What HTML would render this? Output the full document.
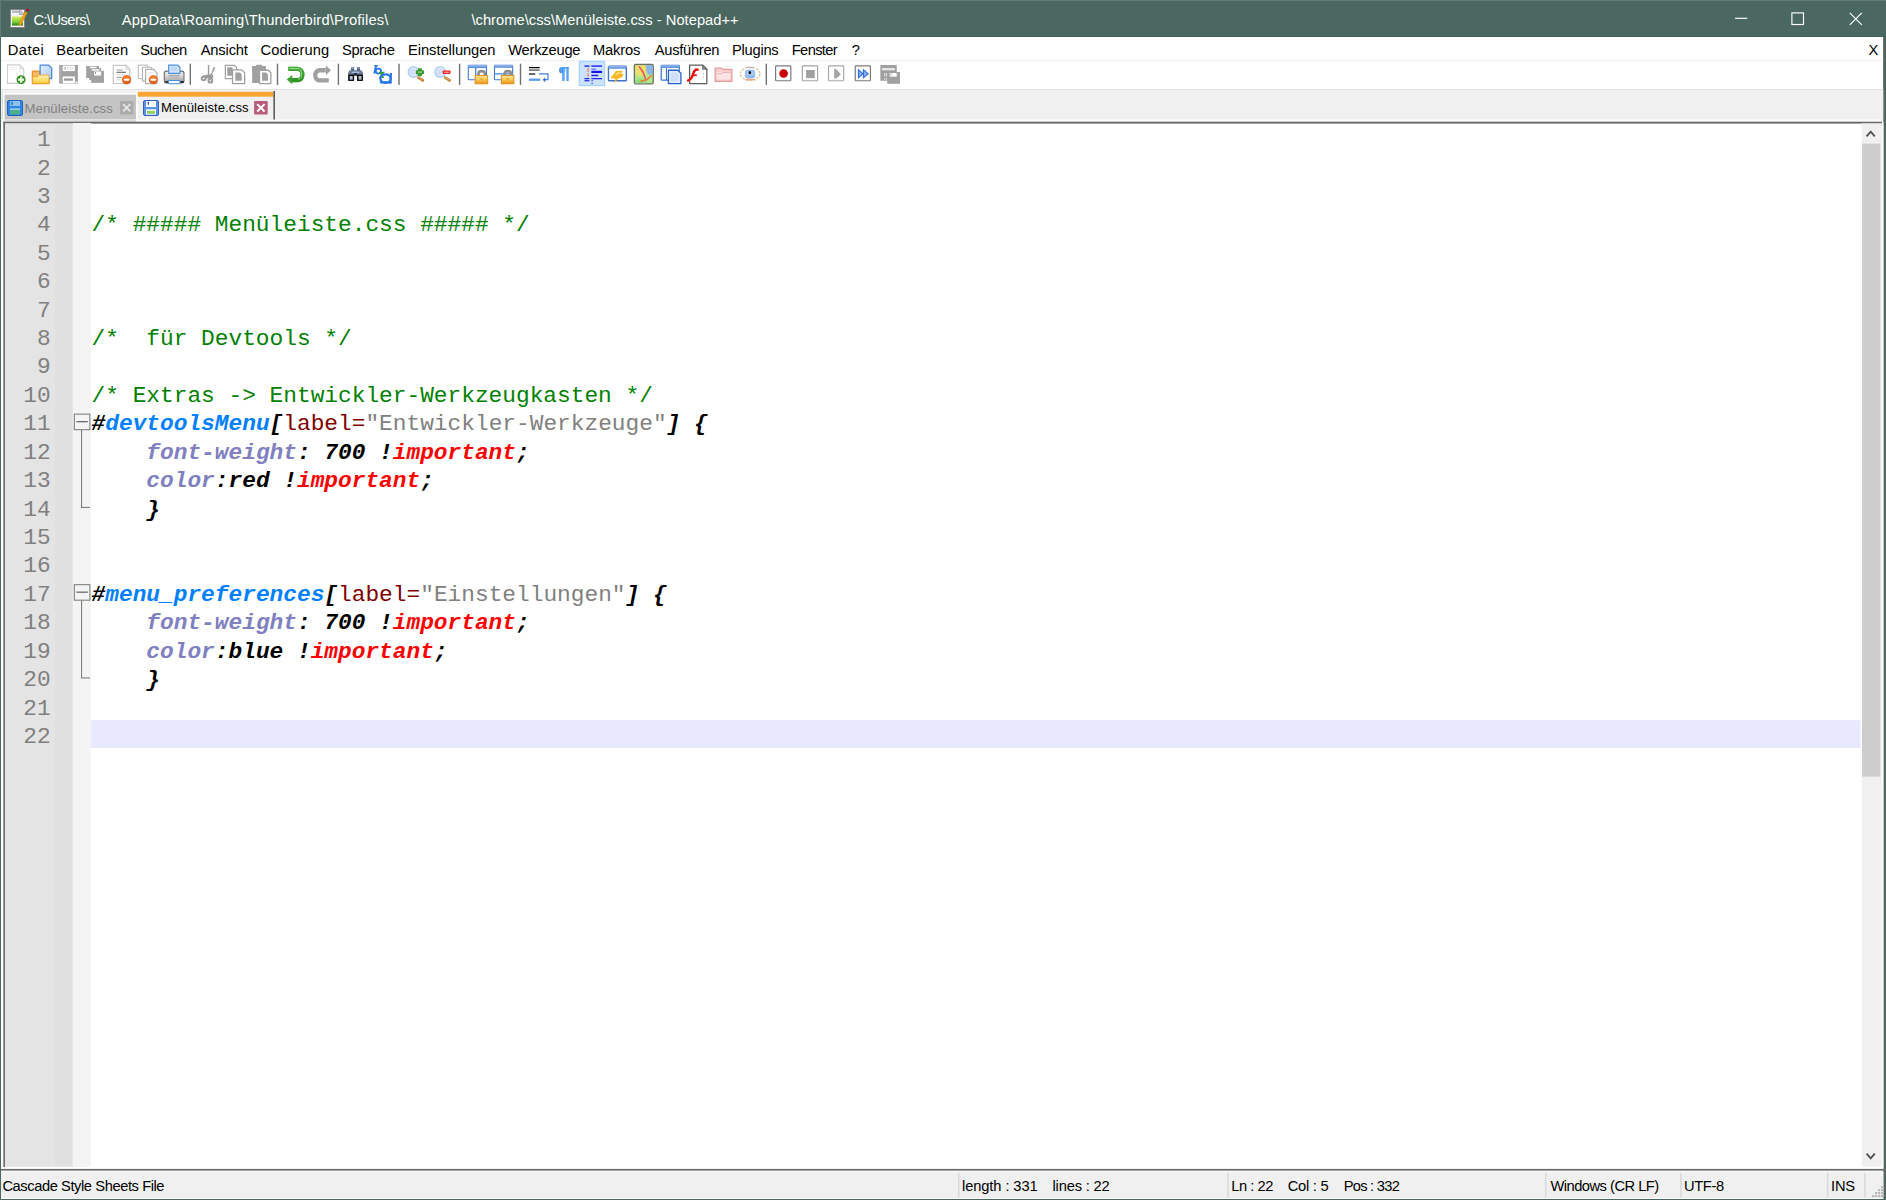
<!DOCTYPE html>
<html lang="de">
<head>
<meta charset="utf-8">
<title>Menüleiste.css - Notepad++</title>
<style>
html,body{margin:0;padding:0;}
body{width:1886px;height:1200px;position:relative;overflow:hidden;background:#fff;font-family:"Liberation Sans",sans-serif;}
.abs{position:absolute;}
.t{position:absolute;white-space:pre;line-height:20px;height:20px;font-family:"Liberation Sans",sans-serif;}
svg{position:absolute;overflow:visible;}
.ic{position:absolute;top:64.6px;width:19.6px;height:19.6px;}
.sep{position:absolute;top:63.6px;height:21.4px;width:1.3px;background:#6e6e6e;}
.code{position:absolute;left:91.6px;white-space:pre;font-family:"Liberation Mono",monospace;font-size:22.82px;line-height:28.42px;height:28.42px;color:#000;}
.ln{position:absolute;left:5px;width:45.6px;text-align:right;white-space:pre;font-family:"Liberation Mono",monospace;font-size:22.82px;line-height:28.42px;height:28.42px;color:#808080;}
.c{color:#008000;}
.bi{font-weight:bold;font-style:italic;}
.b{font-weight:bold;}
.id{color:#0080ff;font-weight:bold;font-style:italic;}
.at{color:#800000;}
.st{color:#808080;}
.pr{color:#8080c0;font-weight:bold;font-style:italic;}
.im{color:#ff0000;font-weight:bold;font-style:italic;}
</style>
</head>

<body>
<!-- window frame -->
<svg style="left:0;top:0" width="1886" height="1200" viewBox="0 0 1886 1200"><rect x="0" y="0" width="1886" height="1200" fill="#4a6860"/><rect x="0" y="0" width="1886" height="1" fill="#5d7c73"/><rect x="0" y="0" width="1" height="37" fill="#5d7c73"/><rect x="1" y="37" width="1882.3" height="1162" fill="#fff"/><rect x="1883.3" y="37" width="1.7" height="1162" fill="#596460"/><rect x="1" y="36" width="1884" height="1" fill="#42605a"/></svg>
<svg style="left:9px;top:7px" width="21" height="23" viewBox="0 0 21 23">
  <rect x="1.5" y="2.5" width="14" height="18" fill="#f4f4f6" stroke="#8a8088" stroke-width="1"/>
  <path d="M10.5 2.5 L15.5 7.5 L10.5 7.5 Z" fill="#c8c8d0" stroke="#8a8088" stroke-width=".6"/>
  <rect x="3" y="3.6" width="7" height="2.2" fill="#9aa" opacity=".8"/>
  <linearGradient id="gi" x1="0" y1="0" x2="0" y2="1"><stop offset="0" stop-color="#d8e85a"/><stop offset=".6" stop-color="#7fd43a"/><stop offset="1" stop-color="#1f7a12"/></linearGradient>
  <rect x="3" y="9.5" width="11" height="9" fill="url(#gi)"/>
  <path d="M9.5 17.5 L16.2 4.6 L18.2 5.8 L11.6 18.4 Z" fill="#f2a516" stroke="#c97f0a" stroke-width=".5"/>
  <circle cx="18.6" cy="2.9" r="1.2" fill="#c80010"/>
</svg>
<!-- caption buttons -->
<svg style="left:1700px;top:1px" width="184" height="36" viewBox="0 0 184 36">
  <g stroke="#fff" stroke-width="1.15" fill="none">
    <path d="M35 17.3 H47.3"/>
    <rect x="91.9" y="11.9" width="11.6" height="11.6"/>
    <path d="M149.8 11.8 L161.8 23.8 M161.8 11.8 L149.8 23.8"/>
  </g>
</svg>
<!-- menu bar / toolbar separators -->
<svg style="left:0;top:0" width="1886" height="1200" viewBox="0 0 1886 1200"><rect x="1" y="60" width="1882.3" height="1" fill="#f0f0f0"/><rect x="1" y="89" width="1882.3" height="1" fill="#e2e2e2"/></svg>

<!-- toolbar -->
<svg style="left:0;top:58px" width="920" height="32" viewBox="0 58 920 32">
<defs><linearGradient id="gfold" x1="0" y1="0" x2="0" y2="1"><stop offset="0" stop-color="#fff3b0"/><stop offset="1" stop-color="#f8d040"/></linearGradient><linearGradient id="gpage" x1="0" y1="0" x2="1" y2="1"><stop offset="0" stop-color="#e6f0fd"/><stop offset="1" stop-color="#a9c8f4"/></linearGradient><radialGradient id="gor" cx=".5" cy=".35" r=".7"><stop offset="0" stop-color="#ff8a30"/><stop offset="1" stop-color="#d84a08"/></radialGradient><linearGradient id="gprn" x1="0" y1="0" x2="0" y2="1"><stop offset="0" stop-color="#f4f4f4"/><stop offset=".6" stop-color="#c8c8c8"/><stop offset="1" stop-color="#8c8c8c"/></linearGradient><linearGradient id="glock" x1="0" y1="0" x2="0" y2="1"><stop offset="0" stop-color="#fde9a0"/><stop offset=".5" stop-color="#f8c850"/><stop offset="1" stop-color="#e8901a"/></linearGradient><linearGradient id="gttl" x1="0" y1="0" x2="0" y2="1"><stop offset="0" stop-color="#9cc0f4"/><stop offset="1" stop-color="#4f86dc"/></linearGradient><linearGradient id="gund" x1="0" y1="0" x2="0" y2="1"><stop offset="0" stop-color="#5cc050"/><stop offset="1" stop-color="#2e9424"/></linearGradient><linearGradient id="gpil" x1="0" y1="0" x2="1" y2="0"><stop offset="0" stop-color="#3f90f0"/><stop offset="1" stop-color="#7ab8f8"/></linearGradient></defs>
<rect x="189.60" y="63.7" width="1.4" height="21.2" fill="#707070"/>
<rect x="276.80" y="63.7" width="1.4" height="21.2" fill="#707070"/>
<rect x="337.70" y="63.7" width="1.4" height="21.2" fill="#707070"/>
<rect x="398.30" y="63.7" width="1.4" height="21.2" fill="#707070"/>
<rect x="458.90" y="63.7" width="1.4" height="21.2" fill="#707070"/>
<rect x="519.80" y="63.7" width="1.4" height="21.2" fill="#707070"/>
<rect x="765.60" y="63.7" width="1.4" height="21.2" fill="#707070"/>
<polygon points="7.42,64.87 19.99,64.87 23.74,68.89 23.74,83.40 7.42,83.40" fill="#fff" stroke="#cdcdcd" stroke-width="1.1" stroke-linejoin="round"/>
<polygon points="19.99,64.87 19.99,68.89 23.74,68.89" fill="#f0f0f0" stroke="#d4d4d4" stroke-width="0.9" stroke-linejoin="round"/>
<polyline points="10.34,67.51 16.96,67.51" fill="none" stroke="#ececec" stroke-width="0.9"/>
<polyline points="10.34,69.44 18.34,69.44" fill="none" stroke="#ececec" stroke-width="0.9"/>
<polyline points="17.79,71.65 21.09,71.65" fill="none" stroke="#ececec" stroke-width="0.9"/>
<circle cx="21.09" cy="79.65" r="4.52" fill="#2f8c1e"/>
<rect x="18.06" y="78.54" width="6.07" height="2.32" fill="#e8f8e0"/>
<rect x="19.99" y="76.61" width="2.32" height="6.18" fill="#e8f8e0"/>
<polygon points="32.40,71.10 39.02,71.10 40.12,73.03 49.11,73.03 49.11,83.62 32.40,83.62" fill="#f6b860" stroke="#e8902a" stroke-width="1.3" stroke-linejoin="round"/>
<polygon points="40.12,65.03 48.39,65.03 51.70,68.18 51.70,78.54 40.12,78.54" fill="url(#gpage)" stroke="#4a8ae8" stroke-width="1.3" stroke-linejoin="round"/>
<polygon points="34.05,76.89 37.09,76.89 39.29,75.12 48.94,75.12 48.94,83.40 32.67,83.40 32.67,76.89" fill="url(#gfold)" stroke="#f0a030" stroke-width="0.8" stroke-linejoin="round"/>
<rect x="59.14" y="65.03" width="18.75" height="18.58" fill="#a0a0a0"/>
<rect x="62.73" y="65.58" width="12.13" height="5.51" fill="#fff"/>
<rect x="64.38" y="66.96" width="1.38" height="2.76" fill="#b0b0b0"/>
<rect x="67.41" y="67.24" width="5.51" height="2.21" fill="#f4f4f4" stroke="#e0e0e0" stroke-width="0.6"/>
<rect x="62.73" y="76.45" width="12.13" height="6.95" fill="#fff"/>
<rect x="64.11" y="78.38" width="8.82" height="2.37" fill="#9a9a9a"/>
<rect x="75.58" y="81.41" width="1.87" height="1.76" fill="#fff"/>
<rect x="60.36" y="65.03" width="0.99" height="18.58" fill="#b8b8b8"/>
<rect x="86.16" y="65.97" width="12.79" height="12.02" fill="#a0a0a0"/>
<rect x="88.92" y="66.69" width="7.72" height="2.21" fill="#fff"/>
<rect x="89.20" y="66.85" width="0.83" height="1.87" fill="#888"/>
<rect x="89.20" y="68.18" width="11.97" height="11.80" fill="#a0a0a0"/>
<rect x="91.68" y="69.06" width="7.72" height="2.04" fill="#f0f0f0"/>
<rect x="91.13" y="70.82" width="12.79" height="12.02" fill="#a0a0a0"/>
<rect x="94.16" y="71.48" width="7.00" height="4.03" fill="#fff"/>
<rect x="95.10" y="71.93" width="0.88" height="1.93" fill="#888"/>
<polygon points="113.24,65.31 126.09,65.31 129.78,69.06 129.78,83.51 113.24,83.51" fill="#fff" stroke="#c6c6c6" stroke-width="1.2" stroke-linejoin="round"/>
<polygon points="126.09,65.31 126.09,69.06 129.78,69.06" fill="#f4f4f4" stroke="#c6c6c6" stroke-width="0.9" stroke-linejoin="round"/>
<polyline points="116.55,70.00 122.89,70.00" fill="none" stroke="#b4b4b4" stroke-width="1.3"/>
<polyline points="116.55,72.31 125.92,72.31" fill="none" stroke="#6e6e6e" stroke-width="1.2"/>
<polyline points="116.55,74.96 124.54,74.96" fill="none" stroke="#dadada" stroke-width="1.2"/>
<polyline points="116.55,77.44 122.06,77.44" fill="none" stroke="#a8a8a8" stroke-width="1.2"/>
<polyline points="116.55,79.76 120.41,79.76" fill="none" stroke="#dcdcdc" stroke-width="1.2"/>
<circle cx="126.58" cy="79.65" r="4.63" fill="url(#gor)"/>
<rect x="123.72" y="78.65" width="5.68" height="1.99" fill="#fff" rx="0.6"/>
<rect x="138.33" y="65.03" width="9.48" height="13.51" fill="#fff" stroke="#c4c4c4" stroke-width="1.2" rx="0.6"/>
<rect x="142.46" y="67.24" width="9.21" height="13.79" fill="#fff" stroke="#b4b4b4" stroke-width="1.2" rx="0.6"/>
<polygon points="145.61,69.44 153.77,69.44 156.97,73.03 156.97,83.62 145.61,83.62" fill="#fff" stroke="#b0b0b0" stroke-width="1.2" stroke-linejoin="round"/>
<polyline points="148.81,72.75 153.22,72.75" fill="none" stroke="#e0e0e0" stroke-width="1"/>
<circle cx="153.33" cy="79.65" r="4.52" fill="url(#gor)"/>
<rect x="150.46" y="78.65" width="5.73" height="1.99" fill="#fff" rx="0.6"/>
<rect x="164.25" y="71.10" width="19.74" height="11.75" fill="url(#gprn)" stroke="#6e6e6e" stroke-width="1.1" rx="2.2"/>
<rect x="165.35" y="81.02" width="18.64" height="1.93" fill="#2a2a2a" rx="1"/>
<polygon points="168.66,65.03 177.59,65.03 179.96,67.40 179.96,73.30 168.66,73.30" fill="#d6e6fc" stroke="#4a8fe6" stroke-width="1.2" stroke-linejoin="round"/>
<rect x="170.59" y="66.69" width="6.34" height="4.41" fill="#bcd6f8"/>
<rect x="168.38" y="80.47" width="11.58" height="3.31" fill="#fff" stroke="#4a8fe6" stroke-width="1.1" rx="0.8"/>
<polyline points="168.66,75.79 179.69,75.79" fill="none" stroke="#9a9a9a" stroke-width="1"/>
<polyline points="168.66,77.99 179.69,77.99" fill="none" stroke="#b0b0b0" stroke-width="1"/>
<polyline points="208.54,65.03 208.54,78.54" fill="none" stroke="#9a9a9a" stroke-width="1.4"/>
<polyline points="214.61,67.24 210.47,75.79" fill="none" stroke="#9a9a9a" stroke-width="1.6"/>
<polygon points="203.03,75.51 207.99,74.41 212.95,74.96 213.23,78.54 210.20,77.99 203.03,78.54" fill="#9c9c9c"/>
<ellipse cx="203.69" cy="78.54" rx="1.99" ry="1.76" fill="#fff" stroke="#9c9c9c" stroke-width="2.0"/>
<ellipse cx="210.31" cy="80.64" rx="1.76" ry="1.87" fill="#fff" stroke="#9c9c9c" stroke-width="2.2"/>
<rect x="210.47" y="71.65" width="1.93" height="1.10" fill="#fff"/>
<polygon points="225.36,65.31 234.46,65.31 236.67,67.62 236.67,78.54 225.36,78.54" fill="#fff" stroke="#a0a0a0" stroke-width="1.2" stroke-linejoin="round"/>
<rect x="227.29" y="67.24" width="5.24" height="8.55" fill="#a0a0a0"/>
<polygon points="232.53,69.83 241.90,69.83 244.66,72.75 244.66,83.62 232.53,83.62" fill="#fff" stroke="#a0a0a0" stroke-width="1.3" stroke-linejoin="round"/>
<polygon points="235.29,72.48 239.97,72.48 241.74,74.41 241.74,80.86 235.29,80.86" fill="#a0a0a0"/>
<rect x="252.11" y="65.97" width="13.79" height="16.98" fill="#a0a0a0"/>
<rect x="255.97" y="64.76" width="6.18" height="1.65" fill="#a0a0a0" rx="0.8"/>
<polygon points="259.55,70.27 268.37,70.27 270.85,72.75 270.85,83.62 259.55,83.62" fill="#fff" stroke="#a0a0a0" stroke-width="1.3" stroke-linejoin="round"/>
<polygon points="262.03,72.59 266.17,72.59 267.93,74.41 267.93,80.86 262.03,80.86" fill="#a0a0a0"/>
<path d="M 288.27 68.89 L 297.65 68.89 C 304.04 68.89 304.04 80.20 297.65 80.20 L 291.86 80.20" fill="none" stroke="url(#gund)" stroke-width="4.2"/>
<path d="M 288.27 68.89 L 297.65 68.89 C 304.04 68.89 304.04 80.20 297.65 80.20 L 291.86 80.20" fill="none" stroke="#2f9626" stroke-width="4.2" opacity=".55"/>
<path d="M 289.65 68.51 L 297.65 68.51 C 302.88 68.51 303.05 78.54 298.20 79.43" fill="none" stroke="#a8e0a0" stroke-width="0.9"/>
<polygon points="286.73,79.54 292.24,74.96 292.24,84.17" fill="#3aa030"/>
<path d="M 328.80 80.47 L 319.70 80.47 C 313.75 80.47 313.75 70.27 319.70 70.27 L 325.77 70.27" fill="none" stroke="#a0a0a0" stroke-width="4.3"/>
<polygon points="331.01,70.27 325.88,65.42 325.88,75.12" fill="#a0a0a0"/>
<rect x="351.13" y="67.24" width="3.03" height="5.24" fill="#3c4a66"/>
<rect x="356.92" y="67.24" width="3.03" height="5.24" fill="#3c4a66"/>
<rect x="351.69" y="67.51" width="1.93" height="1.65" fill="#9ab0d0"/>
<rect x="357.48" y="67.51" width="1.93" height="1.65" fill="#9ab0d0"/>
<polygon points="349.48,70.27 361.61,70.27 362.99,73.03 362.99,75.23 348.10,75.23 348.10,73.03" fill="#6c7c98"/>
<rect x="351.69" y="71.65" width="7.72" height="1.38" fill="#a4bce0"/>
<rect x="348.10" y="74.41" width="6.07" height="6.62" fill="#101010" rx="0.8"/>
<rect x="356.92" y="74.41" width="6.07" height="6.62" fill="#101010" rx="0.8"/>
<rect x="349.76" y="76.06" width="2.92" height="3.58" fill="#b4c2da"/>
<rect x="358.58" y="76.06" width="2.92" height="3.58" fill="#b4c2da"/>
<rect x="354.17" y="73.03" width="2.76" height="2.76" fill="#202830"/>
<polyline points="376.20,65.31 374.27,73.58" fill="none" stroke="#2a78e8" stroke-width="1.9"/>
<ellipse cx="378.41" cy="71.10" rx="2.65" ry="2.48" fill="none" stroke="#2a78e8" stroke-width="1.8"/>
<rect x="374.27" y="65.03" width="3.58" height="1.38" fill="#2a78e8"/>
<polygon points="378.41,71.65 385.02,71.65 382.54,74.68 384.20,77.99 378.96,77.99 380.89,74.96" fill="#2e9e30"/>
<ellipse cx="385.58" cy="78.54" rx="5.24" ry="4.14" fill="none" stroke="#2a78e8" stroke-width="2.4"/>
<polyline points="391.09,73.03 390.26,83.51" fill="none" stroke="#2a78e8" stroke-width="2.0"/>
<rect x="383.65" y="77.99" width="4.14" height="1.93" fill="#fff"/>
<rect x="379.79" y="81.30" width="12.13" height="2.32" fill="#2a78e8" rx="1"/>
<circle cx="413.53" cy="71.93" r="5.24" fill="#e4eefb" stroke="#b4cef2" stroke-width="1.6"/>
<circle cx="412.87" cy="71.93" r="3.31" fill="#d0e0f8"/>
<polyline points="418.39,77.72 422.80,80.47" fill="none" stroke="#c07a28" stroke-width="2.6" stroke-linecap="round"/>
<polyline points="418.39,77.44 422.25,79.76" fill="none" stroke="#e8b878" stroke-width="0.9" stroke-linecap="round"/>
<rect x="415.90" y="70.27" width="8.11" height="3.97" fill="#3a9a2c" rx="0.8"/>
<rect x="417.94" y="68.18" width="4.03" height="8.16" fill="#3a9a2c" rx="0.8"/>
<rect x="418.11" y="71.26" width="3.86" height="1.76" fill="#8acc7c"/>
<circle cx="440.17" cy="71.93" r="5.24" fill="#e4eefb" stroke="#b4cef2" stroke-width="1.6"/>
<circle cx="439.62" cy="71.93" r="3.31" fill="#d0e0f8"/>
<polyline points="445.13,77.72 449.54,80.47" fill="none" stroke="#c07a28" stroke-width="2.6" stroke-linecap="round"/>
<polyline points="445.13,77.44 448.99,79.76" fill="none" stroke="#e8b878" stroke-width="0.9" stroke-linecap="round"/>
<rect x="442.65" y="70.38" width="7.83" height="3.64" fill="#f02424" rx="0.8"/>
<rect x="444.19" y="71.82" width="4.80" height="0.83" fill="#ffd8d8"/>
<rect x="468.27" y="65.31" width="18.20" height="14.45" fill="#fff" stroke="#3f78d0" stroke-width="1.1" rx="0.8"/>
<rect x="468.27" y="65.31" width="18.20" height="2.76" fill="url(#gttl)"/>
<polyline points="475.72,68.07 475.72,79.65" fill="none" stroke="#3f78d0" stroke-width="1.2"/>
<path d="M 478.47 76.34 L 478.47 73.86 C 478.47 70.27 484.81 70.27 484.81 73.86 L 484.81 76.34" fill="none" stroke="#8e8e8e" stroke-width="2.6"/>
<rect x="475.16" y="75.51" width="12.52" height="8.27" fill="url(#glock)" stroke="#e0901c" stroke-width="1"/>
<rect x="480.40" y="78.54" width="2.21" height="1.38" fill="#e89a28"/>
<rect x="494.46" y="65.31" width="18.20" height="14.45" fill="#fff" stroke="#3f78d0" stroke-width="1.1" rx="0.8"/>
<rect x="494.46" y="65.31" width="18.20" height="2.48" fill="url(#gttl)"/>
<polyline points="494.46,73.86 512.66,73.86" fill="none" stroke="#5a8ee0" stroke-width="1.4"/>
<path d="M 504.67 76.34 L 504.67 73.86 C 504.67 70.27 511.01 70.27 511.01 73.86 L 511.01 76.34" fill="none" stroke="#8e8e8e" stroke-width="2.6"/>
<rect x="501.36" y="75.51" width="12.52" height="8.27" fill="url(#glock)" stroke="#e0901c" stroke-width="1"/>
<rect x="506.60" y="78.54" width="2.21" height="1.38" fill="#e89a28"/>
<rect x="528.93" y="66.96" width="10.75" height="1.27" fill="#000"/>
<rect x="528.93" y="69.44" width="10.75" height="1.27" fill="#4a4a4a"/>
<rect x="528.93" y="73.30" width="6.34" height="1.38" fill="#2a2a2a"/>
<path d="M 538.85 73.86 L 547.95 73.86 L 547.95 79.65 L 544.37 79.65" fill="none" stroke="#3f80e0" stroke-width="1.2"/>
<polygon points="542.71,79.65 545.20,77.16 545.20,82.13" fill="#2a6ad8"/>
<rect x="528.93" y="78.54" width="11.30" height="2.32" fill="#5a9af0"/>
<circle cx="562.24" cy="70.27" r="3.20" fill="url(#gpil)"/>
<rect x="562.24" y="67.07" width="2.54" height="13.95" fill="url(#gpil)"/>
<rect x="566.43" y="67.07" width="2.43" height="13.95" fill="url(#gpil)"/>
<rect x="561.86" y="67.07" width="7.00" height="1.43" fill="#4a98f2"/>
<rect x="579.23" y="61.34" width="25.48" height="24.26" fill="#cce4fb" stroke="#9ccffb" stroke-width="1"/>
<rect x="584.46" y="65.42" width="4.96" height="1.32" fill="#1414f0"/>
<rect x="591.36" y="65.42" width="10.75" height="1.32" fill="#1414f0"/>
<rect x="591.36" y="70.82" width="10.75" height="2.21" fill="#1414f0"/>
<rect x="591.36" y="74.79" width="6.89" height="1.43" fill="#1414f0"/>
<rect x="584.46" y="78.10" width="4.96" height="1.16" fill="#1414f0"/>
<rect x="591.36" y="78.10" width="10.75" height="1.16" fill="#1414f0"/>
<rect x="584.46" y="80.20" width="4.96" height="1.10" fill="#1414f0"/>
<rect x="591.36" y="80.47" width="1.76" height="0.83" fill="#1414f0"/>
<rect x="591.36" y="83.23" width="1.54" height="0.72" fill="#1414f0"/>
<rect x="591.36" y="68.62" width="4.69" height="1.16" fill="#5a6cf0"/>
<rect x="587.22" y="68.18" width="1.65" height="3.64" fill="#f08a8a"/>
<rect x="587.22" y="73.30" width="1.65" height="3.47" fill="#f08a8a"/>
<rect x="608.45" y="66.14" width="17.92" height="14.61" fill="#fff" stroke="#3f70c8" stroke-width="1.4" rx="0.8"/>
<rect x="608.45" y="66.14" width="17.92" height="2.59" fill="url(#gttl)"/>
<polygon points="615.90,71.10 623.06,70.71 620.86,73.69 623.78,74.02 621.69,77.44 618.10,78.54 614.24,83.40 615.34,78.82 610.38,78.10 613.41,74.41" fill="#f5b824"/>
<polygon points="617.00,72.20 621.13,71.93 619.20,74.41 615.07,75.79" fill="#fbd868"/>
<rect x="634.37" y="64.48" width="18.86" height="19.30" fill="#b4e48c" stroke="#6e6e68" stroke-width="1.3" rx="1.2"/>
<polygon points="645.95,65.31 652.57,65.31 652.57,73.86 648.71,74.96 646.22,71.37" fill="#8ab6ee"/>
<polygon points="635.20,65.31 645.67,65.31 646.22,71.37 643.74,75.79 638.23,76.34 635.20,73.03" fill="#e8e070"/>
<polygon points="635.20,80.20 640.99,78.54 647.05,81.02 647.05,83.23 635.20,83.23" fill="#8edc7c"/>
<polyline points="639.06,66.41 643.19,72.48 645.95,80.20" fill="none" stroke="#f05260" stroke-width="1.6"/>
<polyline points="640.43,81.30 647.05,79.65 651.74,75.23" fill="none" stroke="#f07838" stroke-width="1.5"/>
<polyline points="643.19,65.86 645.40,73.03" fill="none" stroke="#f4e050" stroke-width="1.3"/>
<rect x="661.23" y="65.31" width="18.03" height="14.89" fill="#fff" stroke="#3f78d0" stroke-width="1.3" rx="0.8"/>
<rect x="661.23" y="65.31" width="18.03" height="2.65" fill="url(#gttl)"/>
<polyline points="666.47,67.96 666.47,80.20" fill="none" stroke="#3f78d0" stroke-width="1.1"/>
<polygon points="668.40,70.27 677.77,70.27 680.92,73.30 680.92,83.62 668.40,83.62" fill="#e2ecfb" stroke="#2a62d0" stroke-width="1.3" stroke-linejoin="round"/>
<polygon points="670.88,72.48 676.67,72.48 678.60,74.41 678.60,81.30 670.88,81.30" fill="#cfdef8"/>
<polygon points="689.63,65.03 702.59,65.03 706.83,69.28 706.83,83.62 689.63,83.62" fill="#fff" stroke="#5c5c5c" stroke-width="1.25" stroke-linejoin="round"/>
<polygon points="702.59,65.03 702.59,69.28 706.83,69.28" fill="#8a8a8a" stroke="#5c5c5c" stroke-width="0.8" stroke-linejoin="round"/>
<path d="M 697.62 69.72 C 694.32 68.62 693.76 72.48 692.66 75.23 C 691.56 78.54 690.46 80.20 687.97 80.47" fill="none" stroke="#e81212" stroke-width="2.4" stroke-linecap="round"/>
<polyline points="692.39,75.34 696.80,75.12" fill="none" stroke="#e81212" stroke-width="1.8"/>
<polyline points="703.41,73.03 703.41,80.20" fill="none" stroke="#b8b8b8" stroke-width="1" stroke-dasharray="1.2 2.4"/>
<polygon points="715.10,68.18 721.50,68.18 722.71,69.44 731.98,69.44 731.98,81.41 715.10,81.41" fill="#f6cccc" stroke="#e49c9c" stroke-width="1.2" stroke-linejoin="round"/>
<polygon points="716.92,71.93 730.43,71.93 730.43,79.65 716.92,79.65" fill="#fbe4e4"/>
<polyline points="717.20,73.86 721.06,73.86 722.71,72.48 730.43,72.48" fill="none" stroke="#eeb0b0" stroke-width="1"/>
<ellipse cx="750.13" cy="73.86" rx="9.71" ry="6.62" fill="#fff" stroke="#f2c49a" stroke-width="1.2" stroke-dasharray="2.6 1.1"/>
<ellipse cx="750.13" cy="73.86" rx="9.71" ry="6.62" fill="none" stroke="#b4dcae" stroke-width="1.1" stroke-dasharray="1.4 6.2"/>
<rect x="745.16" y="69.72" width="9.93" height="8.82" fill="#8fb9f0" rx="2.4"/>
<rect x="746.54" y="71.10" width="7.17" height="4.14" fill="#a9caf4" rx="1"/>
<ellipse cx="749.85" cy="72.59" rx="1.21" ry="1.65" fill="#000"/>
<ellipse cx="750.13" cy="79.54" rx="5.24" ry="0.88" fill="#f2a884"/>
<rect x="746.54" y="66.96" width="7.28" height="1.21" fill="#b2b2b2"/>
<rect x="775.60" y="65.97" width="15.22" height="14.78" fill="#fff" stroke="#7a7a7a" stroke-width="1.2" rx="0.8"/>
<circle cx="783.60" cy="73.47" r="4.30" fill="#c80000"/>
<rect x="802.35" y="65.97" width="15.22" height="14.78" fill="#fff" stroke="#a4a4a4" stroke-width="1.2" rx="0.8"/>
<rect x="806.10" y="70.00" width="8.66" height="8.11" fill="#a0a0a0"/>
<rect x="828.51" y="65.97" width="15.16" height="14.78" fill="#fff" stroke="#a8a8a8" stroke-width="1.2" rx="0.8"/>
<path d="M 834.19 68.62 C 837.06 69.17 839.26 72.48 840.81 74.41 C 839.26 75.79 837.06 78.54 834.19 78.54 Z" fill="#a4a4a4"/>
<rect x="855.25" y="65.97" width="15.16" height="14.78" fill="#fff" stroke="#7a7a7a" stroke-width="1.2" rx="0.8"/>
<polygon points="857.90,68.51 857.90,78.98 863.80,73.86" fill="#2f6fe0"/>
<polygon points="862.86,68.51 862.86,78.98 868.93,73.86" fill="#2f6fe0"/>
<polygon points="859.11,71.10 859.11,76.61 862.15,73.86" fill="#8ab4f4"/>
<polygon points="864.08,71.10 864.08,76.61 867.11,73.86" fill="#8ab4f4"/>
<rect x="880.34" y="65.03" width="16.38" height="15.72" fill="#a0a0a0"/>
<rect x="882.00" y="68.07" width="12.96" height="2.21" fill="#e8e8e8"/>
<rect x="884.20" y="73.03" width="1.10" height="3.42" fill="#e4e4e4"/>
<rect x="886.13" y="73.03" width="1.10" height="3.42" fill="#e4e4e4"/>
<rect x="884.20" y="77.99" width="1.10" height="1.76" fill="#e4e4e4"/>
<rect x="886.13" y="77.99" width="1.10" height="1.76" fill="#e4e4e4"/>
<rect x="887.24" y="71.93" width="12.68" height="11.86" fill="#a0a0a0"/>
<rect x="889.72" y="73.03" width="7.00" height="3.58" fill="#fff"/>
<rect x="890.66" y="73.47" width="0.88" height="1.76" fill="#888"/>
</svg>

<!-- tab bar -->
<svg style="left:0;top:0" width="1886" height="1200" viewBox="0 0 1886 1200"><rect x="1" y="90" width="1882.3" height="29.6" fill="#f0f0f0"/><rect x="2.3" y="93" width="0.8" height="26.6" fill="#cfcfcf"/><rect x="3" y="93" width="134" height="26.6" fill="#fff"/><rect x="4.5" y="94.6" width="131.5" height="25" fill="#c4c4c4"/><rect x="136.5" y="91" width="138" height="28.6" fill="#f0f0f0"/><rect x="136.3" y="91.5" width="1.5" height="28.2" fill="#fff"/><rect x="137.8" y="91.8" width="135.7" height="4.9" fill="#faa635"/><rect x="273.4" y="91" width="1.6" height="29.7" fill="#5e5e5e"/></svg>
<svg style="left:7px;top:100px" width="16" height="16" viewBox="0 0 16 16">
  <rect x=".5" y=".5" width="15" height="15" rx="1.5" fill="#2f86e0" stroke="#1c63c0"/>
  <rect x="3" y="1" width="10" height="5" fill="#8ec0f0"/><rect x="4.2" y="1.8" width="1.6" height="3" fill="#2f6fc0"/>
  <rect x="3" y="9.5" width="10" height="5" fill="#4fae8e"/><rect x="3" y="8.5" width="10" height="1.2" fill="#bfe0f8"/>
</svg>
<svg style="left:143px;top:100px" width="16" height="16" viewBox="0 0 16 16">
  <rect x=".5" y=".5" width="15" height="15" rx="1.5" fill="#5a94e8" stroke="#2f5fc0"/>
  <rect x="3" y="1" width="10" height="6" fill="#fff"/><rect x="4.6" y="1.8" width="1.4" height="3" fill="#2f5fc0"/>
  <rect x="3" y="9.3" width="10" height="5.4" fill="#fff"/><rect x="4" y="10.8" width="8" height="3" fill="#8ed060"/>
</svg>
<!-- close buttons -->
<svg style="left:119.7px;top:101px" width="13.4" height="13.4" viewBox="0 0 14 14">
  <rect width="14" height="14" rx="1" fill="#ababab"/>
  <path d="M3.2 3.2 L10.8 10.8 M10.8 3.2 L3.2 10.8" stroke="#e6e6e6" stroke-width="1.9"/>
</svg>
<svg style="left:253.6px;top:101px" width="13.8" height="13.6" viewBox="0 0 14 14">
  <rect width="14" height="14" rx="1" fill="#b85c7e"/>
  <path d="M3.2 3.2 L10.8 10.8 M10.8 3.2 L3.2 10.8" stroke="#fff" stroke-width="2"/>
</svg>

<!-- editor -->
<svg style="left:0;top:0" width="1886" height="1200" viewBox="0 0 1886 1200"><rect x="1" y="119.6" width="1882.3" height="2.4" fill="#fbfbfb"/><rect x="4.5" y="119.6" width="131.6" height="2.3" fill="#dcdcdc"/><rect x="3" y="122" width="1880.6" height="1047" fill="#fff"/><rect x="3.3" y="121.7" width="1878.7" height="1.9" fill="#6a6a6a"/><rect x="3.3" y="121.8" width="1.7" height="1045.2" fill="#6e6e6e"/><rect x="1" y="1168.9" width="1884" height="1.9" fill="#6c6c6c"/><rect x="5" y="123.4" width="49.2" height="1043.4" fill="#e4e4e4"/><rect x="54.2" y="123.4" width="18.6" height="1043.4" fill="#e0e0e0"/></svg>
<div class="abs" style="left:72.8px;top:123.4px;width:18.3px;height:1043.4px;background:#f8f8f8;background-image:linear-gradient(45deg,#f0f0f0 25%,transparent 25%,transparent 75%,#f0f0f0 75%),linear-gradient(45deg,#f0f0f0 25%,transparent 25%,transparent 75%,#f0f0f0 75%);background-size:2px 2px;background-position:0 0,1px 1px;"></div>
<svg style="left:0;top:0" width="1886" height="1200" viewBox="0 0 1886 1200"><rect x="91.1" y="720.12" width="1769.4" height="27.9" fill="#e8e8ff"/><rect x="1861.8" y="123.4" width="20" height="1043.4" fill="#f0f0f0"/><rect x="1862" y="143.6" width="18.2" height="633" fill="#cdcdcd"/></svg>
<svg style="left:1861px;top:123px" width="20" height="20" viewBox="0 0 20 20"><path d="M5.6 13.3 L9.7 8.6 L13.8 13.3" fill="none" stroke="#505050" stroke-width="1.8"/></svg>
<svg style="left:1861px;top:1145.7px" width="20" height="20" viewBox="0 0 20 20"><path d="M5.6 7.7 L9.7 12.4 L13.8 7.7" fill="none" stroke="#505050" stroke-width="1.8"/></svg>
<svg style="left:0;top:0" width="1886" height="1200" viewBox="0 0 1886 1200"><rect x="81" y="429.71" width="1.1" height="77.86" fill="#808080"/><rect x="81" y="506.87" width="9" height="1.1" fill="#808080"/><rect x="74.35" y="414.16" width="15.5" height="15.5" fill="#f4f4f4" stroke="#808080" stroke-width="1.1"/><rect x="76.4" y="421.01" width="11.4" height="1.3" fill="#6a6a6a"/><rect x="81" y="600.23" width="1.1" height="77.86" fill="#808080"/><rect x="81" y="677.39" width="9" height="1.1" fill="#808080"/><rect x="74.35" y="584.68" width="15.5" height="15.5" fill="#f4f4f4" stroke="#808080" stroke-width="1.1"/><rect x="76.4" y="591.53" width="11.4" height="1.3" fill="#6a6a6a"/></svg>
<div class="ln" style="top:126.10px">1</div>
<div class="ln" style="top:154.52px">2</div>
<div class="ln" style="top:182.94px">3</div>
<div class="ln" style="top:211.36px">4</div>
<div class="code" style="top:211.36px"><span class="c">/* ##### Menüleiste.css ##### */</span></div>
<div class="ln" style="top:239.78px">5</div>
<div class="ln" style="top:268.20px">6</div>
<div class="ln" style="top:296.62px">7</div>
<div class="ln" style="top:325.04px">8</div>
<div class="code" style="top:325.04px"><span class="c">/*  für Devtools */</span></div>
<div class="ln" style="top:353.46px">9</div>
<div class="ln" style="top:381.88px">10</div>
<div class="code" style="top:381.88px"><span class="c">/* Extras -&gt; Entwickler-Werkzeugkasten */</span></div>
<div class="ln" style="top:410.30px">11</div>
<div class="code" style="top:410.30px"><span class="bi">#</span><span class="id">devtoolsMenu</span><span class="bi">[</span><span class="at">label=</span><span class="st">"Entwickler-Werkzeuge"</span><span class="bi">] {</span></div>
<div class="ln" style="top:438.72px">12</div>
<div class="code" style="top:438.72px">    <span class="pr">font-weight</span><span class="bi">: 700 !</span><span class="im">important</span><span class="bi">;</span></div>
<div class="ln" style="top:467.14px">13</div>
<div class="code" style="top:467.14px">    <span class="pr">color</span><span class="bi">:red</span><span class="bi"> !</span><span class="im">important</span><span class="bi">;</span></div>
<div class="ln" style="top:495.56px">14</div>
<div class="code" style="top:495.56px">    <span class="bi">}</span></div>
<div class="ln" style="top:523.98px">15</div>
<div class="ln" style="top:552.40px">16</div>
<div class="ln" style="top:580.82px">17</div>
<div class="code" style="top:580.82px"><span class="bi">#</span><span class="id">menu_preferences</span><span class="bi">[</span><span class="at">label=</span><span class="st">"Einstellungen"</span><span class="bi">] {</span></div>
<div class="ln" style="top:609.24px">18</div>
<div class="code" style="top:609.24px">    <span class="pr">font-weight</span><span class="bi">: 700 !</span><span class="im">important</span><span class="bi">;</span></div>
<div class="ln" style="top:637.66px">19</div>
<div class="code" style="top:637.66px">    <span class="pr">color</span><span class="bi">:blue</span><span class="bi"> !</span><span class="im">important</span><span class="bi">;</span></div>
<div class="ln" style="top:666.08px">20</div>
<div class="code" style="top:666.08px">    <span class="bi">}</span></div>
<div class="ln" style="top:694.50px">21</div>
<div class="ln" style="top:722.92px">22</div>
<!-- status bar -->
<svg style="left:0;top:0" width="1886" height="1200" viewBox="0 0 1886 1200"><rect x="1" y="1170.8" width="1882.3" height="28.2" fill="#fff"/><rect x="1" y="1171.7" width="1882.3" height="26.6" fill="#f0f0f0"/><rect x="958" y="1172.6" width="1.5" height="25" fill="#d9d9d9"/><rect x="1227.3" y="1172.6" width="1.5" height="25" fill="#d9d9d9"/><rect x="1545" y="1172.6" width="1.5" height="25" fill="#d9d9d9"/><rect x="1680.2" y="1172.6" width="1.5" height="25" fill="#d9d9d9"/><rect x="1826.9" y="1172.6" width="1.5" height="25" fill="#d9d9d9"/><rect x="1864.2" y="1172.6" width="1.5" height="25" fill="#d9d9d9"/></svg>
<svg style="left:1872px;top:1185.5px" width="12" height="12" viewBox="0 0 12 12" fill="#b9b9b9">
  <rect x="9" y="0" width="2.2" height="2.2"/>
  <rect x="6" y="3" width="2.2" height="2.2"/><rect x="9" y="3" width="2.2" height="2.2"/>
  <rect x="3" y="6" width="2.2" height="2.2"/><rect x="6" y="6" width="2.2" height="2.2"/><rect x="9" y="6" width="2.2" height="2.2"/>
  <rect x="0" y="9" width="2.2" height="2.2"/><rect x="3" y="9" width="2.2" height="2.2"/><rect x="6" y="9" width="2.2" height="2.2"/><rect x="9" y="9" width="2.2" height="2.2"/>
</svg>

<!-- text -->
<span class="t title" style="left:33.40px;top:9.71px;font-size:14.7px;letter-spacing:-0.550px;color:#fff">C:\Users\</span>
<span class="t title" style="left:121.80px;top:9.71px;font-size:14.7px;letter-spacing:0.172px;color:#fff">AppData\Roaming\Thunderbird\Profiles\</span>
<span class="t title" style="left:471.40px;top:9.71px;font-size:14.7px;letter-spacing:0.032px;color:#fff">\chrome\css\Menüleiste.css - Notepad++</span>
<span class="t menu" style="left:7.70px;top:39.51px;font-size:14.7px;letter-spacing:0.475px;color:#000">Datei</span>
<span class="t menu" style="left:56.30px;top:39.51px;font-size:14.7px;letter-spacing:0.100px;color:#000">Bearbeiten</span>
<span class="t menu" style="left:140.20px;top:39.51px;font-size:14.7px;letter-spacing:-0.560px;color:#000">Suchen</span>
<span class="t menu" style="left:200.70px;top:39.51px;font-size:14.7px;letter-spacing:-0.150px;color:#000">Ansicht</span>
<span class="t menu" style="left:260.50px;top:39.51px;font-size:14.7px;letter-spacing:0.112px;color:#000">Codierung</span>
<span class="t menu" style="left:342.00px;top:39.51px;font-size:14.7px;letter-spacing:-0.300px;color:#000">Sprache</span>
<span class="t menu" style="left:408.10px;top:39.51px;font-size:14.7px;letter-spacing:-0.067px;color:#000">Einstellungen</span>
<span class="t menu" style="left:508.20px;top:39.51px;font-size:14.7px;letter-spacing:-0.212px;color:#000">Werkzeuge</span>
<span class="t menu" style="left:593.00px;top:39.51px;font-size:14.7px;letter-spacing:-0.180px;color:#000">Makros</span>
<span class="t menu" style="left:654.70px;top:39.51px;font-size:14.7px;letter-spacing:-0.263px;color:#000">Ausführen</span>
<span class="t menu" style="left:732.00px;top:39.51px;font-size:14.7px;letter-spacing:-0.250px;color:#000">Plugins</span>
<span class="t menu" style="left:791.80px;top:39.51px;font-size:14.7px;letter-spacing:-0.650px;color:#000">Fenster</span>
<span class="t menu" style="left:851.70px;top:39.51px;font-size:14.7px;letter-spacing:0.000px;color:#000">?</span>
<span class="t menu" style="left:1868.50px;top:39.51px;font-size:14.7px;letter-spacing:0.000px;color:#000">X</span>
<span class="t tab" style="left:24.50px;top:99.46px;font-size:13.1px;letter-spacing:0.131px;color:#808080">Menüleiste.css</span>
<span class="t tab" style="left:161.00px;top:97.86px;font-size:13.1px;letter-spacing:0.077px;color:#000">Menüleiste.css</span>
<span class="t status" style="left:2.40px;top:1175.71px;font-size:14.7px;letter-spacing:-0.421px;color:#000">Cascade Style Sheets File</span>
<span class="t status" style="left:962.00px;top:1175.71px;font-size:14.7px;letter-spacing:-0.100px;color:#000">length : 331</span>
<span class="t status" style="left:1052.50px;top:1175.71px;font-size:14.7px;letter-spacing:-0.167px;color:#000">lines : 22</span>
<span class="t status" style="left:1231.20px;top:1175.71px;font-size:14.7px;letter-spacing:-0.433px;color:#000">Ln : 22</span>
<span class="t status" style="left:1287.70px;top:1175.71px;font-size:14.7px;letter-spacing:-0.250px;color:#000">Col : 5</span>
<span class="t status" style="left:1343.70px;top:1175.71px;font-size:14.7px;letter-spacing:-0.738px;color:#000">Pos : 332</span>
<span class="t status" style="left:1550.40px;top:1175.71px;font-size:14.7px;letter-spacing:-0.507px;color:#000">Windows (CR LF)</span>
<span class="t status" style="left:1684.00px;top:1175.71px;font-size:14.7px;letter-spacing:-0.375px;color:#000">UTF-8</span>
<span class="t status" style="left:1831.00px;top:1175.71px;font-size:14.7px;letter-spacing:-0.200px;color:#000">INS</span>
</body>
</html>
